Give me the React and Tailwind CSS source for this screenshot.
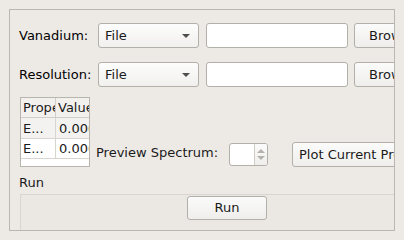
import React from 'react'

const font = { fontFamily: '"DejaVu Sans", sans-serif' }

function Combo() {
    return (
        <div className="relative flex h-[25px] w-[101px] shrink-0 items-center rounded-[3px] border border-[#b3afa9] bg-gradient-to-b from-[#fdfdfd] to-[#f1f0ee] pl-[6px] text-[#1a1a1a]">
            File
            <span className="absolute right-[8px] top-[10px] h-0 w-0 border-x-[4px] border-t-[4px] border-x-transparent border-t-[#4e4e4e]" />
        </div>
    )
}

function Button({ children, className = '' }) {
    return (
        <div className={`flex shrink-0 items-center justify-center rounded-[3px] border border-[#b3afa9] bg-gradient-to-b from-[#fbfbfb] to-[#efeeec] text-[#1a1a1a] ${className}`}>
            {children}
        </div>
    )
}

function FileRow({ label, className = '' }) {
    return (
        <div className={`flex h-[25px] items-center ${className}`}>
            <div className="w-[79px] shrink-0">{label}</div>
            <Combo />
            <div className="ml-[7px] h-[25px] w-[142px] shrink-0 rounded-[3px] border border-[#b3afa9] bg-white" />
            <Button className="ml-[6px] h-[25px] w-[80px] justify-start pl-[14px]">Browse</Button>
        </div>
    )
}

function Table() {
    return (
        <div className="h-[70px] w-[70px] shrink-0 overflow-hidden border border-[#b8b4ae] bg-white text-[#1a1a1a]">
            <div className="flex h-[20px] border-b border-[#d2cfca] bg-[#f3f1ee]">
                <div className="w-[35px] shrink-0 overflow-hidden border-r border-[#d2cfca] pl-[2px] leading-[20px]">Properties</div>
                <div className="w-[34px] shrink-0 overflow-hidden pl-[2px] leading-[20px]">Value</div>
            </div>
            <div className="flex h-[21px] border-b border-[#d8d5d1] bg-[#f3f2f0]">
                <div className="w-[35px] shrink-0 border-r border-[#d8d5d1] pl-[2px] leading-[21px]">E...</div>
                <div className="w-[34px] shrink-0 overflow-hidden pl-[3px] leading-[21px]">0.0000</div>
            </div>
            <div className="flex h-[20px] border-b border-[#d8d5d1]">
                <div className="w-[35px] shrink-0 border-r border-[#d8d5d1] pl-[2px] leading-[20px]">E...</div>
                <div className="w-[34px] shrink-0 overflow-hidden pl-[3px] leading-[20px]">0.0000</div>
            </div>
        </div>
    )
}

function SpinBox() {
    return (
        <div className="flex h-[23px] w-[39px] shrink-0 overflow-hidden rounded-[3px] border border-[#b3afa9] bg-white">
            <div className="flex-1" />
            <div className="flex w-[13px] flex-col items-center justify-center gap-[3px] border-l border-[#d0ccc7] bg-gradient-to-b from-[#fbfbfb] to-[#efeeec]">
                <span className="h-0 w-0 border-x-[4px] border-b-[4px] border-x-transparent border-b-[#b5b2ae]" />
                <span className="h-0 w-0 border-x-[4px] border-t-[4px] border-x-transparent border-t-[#b5b2ae]" />
            </div>
        </div>
    )
}

export default function App() {
    return (
        <div className="h-[240px] w-[404px] overflow-hidden bg-[#edeae6] pl-[9px] pt-[9px] text-[13px] whitespace-nowrap" style={font}>
            <div className="h-[222px] w-[386px] overflow-hidden border border-[#bab6b1]">
                <div className="flex w-[600px] flex-col pl-[9px] pt-[13px]">
                    <FileRow label="Vanadium:" />
                    <FileRow label="Resolution:" className="mt-[14px]" />

                    <div className="ml-[1px] mt-[10px] flex items-end">
                        <Table />
                        <div className="mb-[5px] ml-[6px] w-[133px] shrink-0 text-[#1a1a1a]">Preview Spectrum:</div>
                        <div className="mb-[1px]">
                            <SpinBox />
                        </div>
                        <Button className="ml-[24px] h-[25px] w-[150px] justify-start pl-[6px]">Plot Current Preview</Button>
                    </div>

                    <div className="mt-[8px] h-[16px] leading-[16px] text-[#1a1a1a]">Run</div>
                    <div className="ml-[1px] mt-[3px] flex h-[40px] w-[414px] justify-center border border-[#d9d5d0] bg-[#ebe8e4] pt-[1px]">
                        <Button className="h-[24px] w-[80px]">Run</Button>
                    </div>
                </div>
            </div>
        </div>
    )
}
